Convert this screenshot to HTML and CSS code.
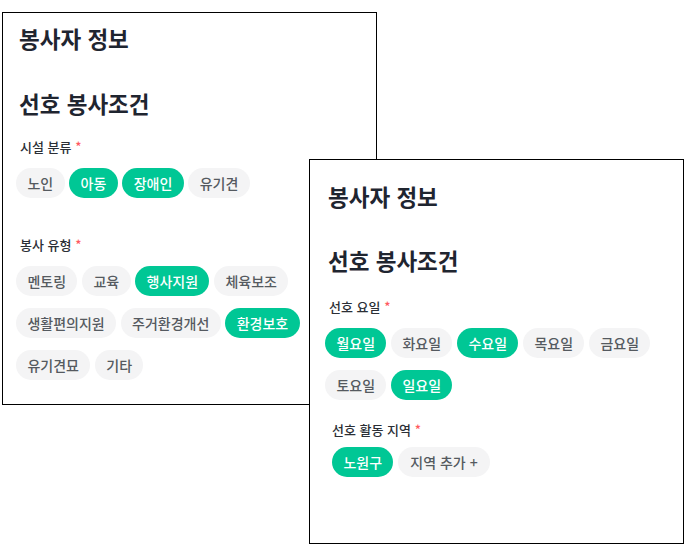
FILE: index.html
```html
<!DOCTYPE html>
<html lang="ko">
<head>
    <meta charset="UTF-8">
    <meta name="viewport" content="width=device-width, initial-scale=1.0">
    <title>봉사자 정보</title>
    <link rel="stylesheet" href="styles.css">
</head>
<body>
    <div class="panel panel-first">
        <h2 class="title">봉사자 정보</h2>
        <h3 class="subtitle">선호 봉사조건</h3>

        <div class="field">
            <p class="label">시설 분류 <span class="req">*</span></p>
            <div class="chips">
                <span class="chip">노인</span>
                <span class="chip on">아동</span>
                <span class="chip on">장애인</span>
                <span class="chip">유기견</span>
            </div>
        </div>

        <div class="field field-gap">
            <p class="label">봉사 유형 <span class="req">*</span></p>
            <div class="chips">
                <span class="chip">멘토링</span>
                <span class="chip">교육</span>
                <span class="chip on">행사지원</span>
                <span class="chip">체육보조</span>
                <span class="chip">생활편의지원</span>
                <span class="chip">주거환경개선</span>
                <span class="chip on">환경보호</span>
                <span class="chip">유기견묘</span>
                <span class="chip">기타</span>
            </div>
        </div>
    </div>

    <div class="panel panel-second">
        <h2 class="title">봉사자 정보</h2>
        <h3 class="subtitle">선호 봉사조건</h3>

        <div class="field field-days">
            <p class="label">선호 요일 <span class="req">*</span></p>
            <div class="chips">
                <span class="chip on">월요일</span>
                <span class="chip">화요일</span>
                <span class="chip on">수요일</span>
                <span class="chip">목요일</span>
                <span class="chip">금요일</span>
                <span class="chip">토요일</span>
                <span class="chip on">일요일</span>
            </div>
        </div>

        <div class="field region">
            <p class="label">선호 활동 지역 <span class="req">*</span></p>
            <div class="chips">
                <span class="chip on">노원구</span>
                <span class="chip add">지역 추가 +</span>
            </div>
        </div>
    </div>
</body>
</html>
```

FILE: styles.css
```css
body {
    margin: 0;
    position: relative;
    width: 686px;
    height: 544px;
    background: #ffffff;
    font-family: "Noto Sans CJK KR", "Noto Sans", sans-serif;
    color: #1f2530;
    overflow: hidden;
}
.panel {
    position: absolute;
    box-sizing: border-box;
    width: 375px;
    background: #ffffff;
    border: 1px solid #000000;
}
.panel-first {
    left: 2px;
    top: 12px;
    height: 393px;
    padding: 10px 13px 0 13px;
}
.panel-second {
    left: 309px;
    top: 159px;
    height: 385px;
    padding: 21px 15px 0 15px;
}
.title,
.subtitle {
    margin: 0 0 0 3px;
    font-size: 22.5px;
    line-height: 30px;
    font-weight: 700;
    color: #1f2530;
}
.subtitle {
    margin-top: 35px;
}
.panel-second .subtitle {
    margin-top: 33.5px;
}
.field {
    margin-top: 19px;
}
.field-gap {
    margin-top: 37px;
}
.field-days {
    margin-top: 22px;
}
.label {
    margin: 0 0 11px 4px;
    font-size: 13px;
    line-height: 20px;
    font-weight: 500;
    color: #2b2f36;
}
.req {
    color: #ff5b61;
}
.chips {
    display: flex;
    flex-wrap: wrap;
    gap: 12px 4.6px;
}
.chip {
    box-sizing: border-box;
    height: 30px;
    padding: 0 11.4px;
    border-radius: 15px;
    background: #f4f4f5;
    color: #555a60;
    font-size: 14px;
    line-height: 30px;
    font-weight: 500;
    white-space: nowrap;
}
.chip.on {
    background: #00c795;
    color: #ffffff;
}
.chip.add {
    padding: 0 12.3px;
}
.region {
    margin-top: 20px;
    padding-left: 7px;
}
.region .label {
    margin-bottom: 7px;
    margin-left: 0;
}
```
